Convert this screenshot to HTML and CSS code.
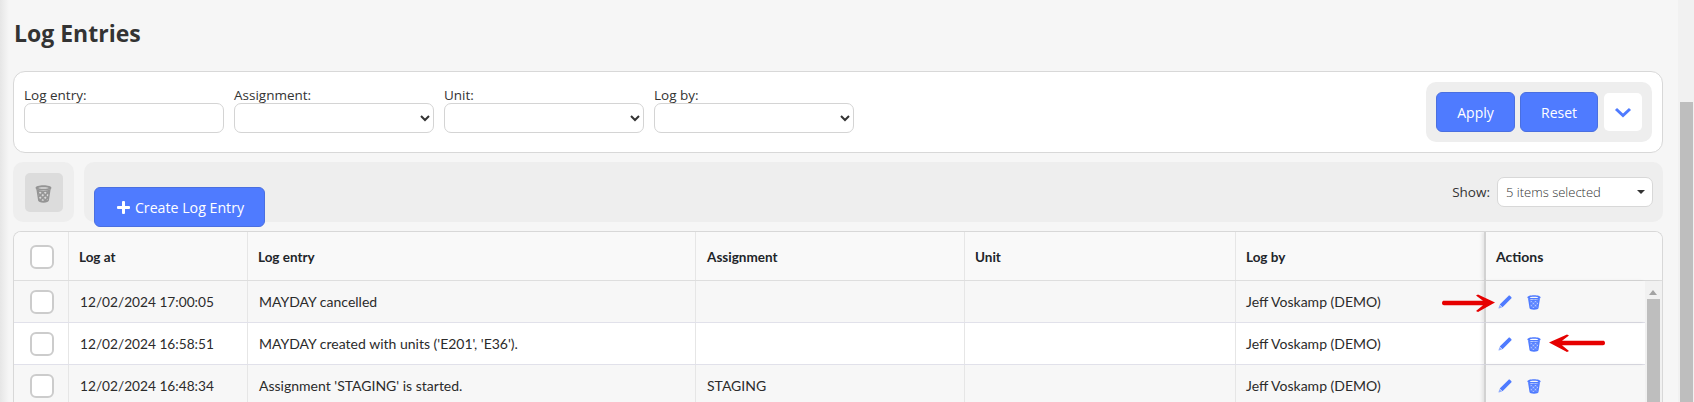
FILE: index.html
```html
<!DOCTYPE html>
<html lang="en">
<head>
<meta charset="utf-8">
<title>Log Entries</title>
<link rel="stylesheet" href="styles.css">
</head>
<body>
<svg class="defs" width="0" height="0" aria-hidden="true">
  <defs>
    <pattern id="mesh" width="3" height="3" patternUnits="userSpaceOnUse" patternTransform="rotate(45)">
      <rect x="0.7" y="0.7" width="1.6" height="1.6" fill="#fff" fill-opacity=".65"/>
    </pattern>
    <symbol id="bin" viewBox="0 0 14 15">
      <path d="M1 3.200 2.500 13c.1 1 2 1.700 4.500 1.700s4.400-.7 4.500-1.700L13 3.200C11.500 4.300 9.300 4.700 7 4.700S2.500 4.300 1 3.200Z" fill="currentColor"/>
      <path d="M2.600 5.200 3.600 12.500c1 .8 5.800.8 6.800 0L11.400 5.200C9 5.900 5 5.900 2.600 5.200Z" fill="url(#mesh)"/>
      <path d="M7 .3C3.400.3.400 1.200.4 2.500S3.400 4.400 7 4.400s6.600-.6 6.600-1.900S10.600.3 7 .3Zm0 1.500c2.600 0 4.300.3 4.300.7S9.600 3.100 7 3.100 2.700 2.900 2.700 2.500 4.400 1.800 7 1.800Z" fill="currentColor"/>
    </symbol>
    <symbol id="pencil" viewBox="0 0 14 14">
      <path d="M1.700 9.500 10.400.9c.5-.5 1.200-.5 1.700 0l1.100 1c.5.500.5 1.200 0 1.700L4.500 12.300Z" fill="currentColor"/>
      <path d="M1.500 9.900 4.100 12.500.9 13.500c-.3.1-.5-.1-.4-.4Z" fill="currentColor" fill-opacity=".6"/>
    </symbol>
  </defs>
</svg>
<div class="page">
  <main class="content">
    <h1 class="title">Log Entries</h1>

    <section class="filters">
      <div class="field">
        <label class="field-label">Log entry:</label>
        <input class="control" type="text">
      </div>
      <div class="field">
        <label class="field-label">Assignment:</label>
        <select class="control"><option></option></select>
      </div>
      <div class="field">
        <label class="field-label">Unit:</label>
        <select class="control"><option></option></select>
      </div>
      <div class="field">
        <label class="field-label">Log by:</label>
        <select class="control"><option></option></select>
      </div>
      <div class="filter-actions">
        <button class="btn btn-apply" type="button">Apply</button>
        <button class="btn btn-reset" type="button">Reset</button>
        <button class="btn-more" type="button" aria-label="More filters">
          <svg width="18" height="11" viewBox="0 0 18 11"><path d="M2 2 9 8.500 16 2" fill="none" stroke="currentColor" stroke-width="3"/></svg>
        </button>
      </div>
    </section>

    <section class="toolbar">
      <div class="bulk-panel">
        <button class="bulk-delete" type="button" aria-label="Delete selected">
          <svg class="bin-icon"><use href="#bin"/></svg>
        </button>
      </div>
      <div class="tool-panel">
        <button class="btn btn-create" type="button"><span class="plus"></span>Create Log Entry</button>
        <div class="show">
          <span class="show-label">Show:</span>
          <div class="show-select">5 items selected<span class="caret"></span></div>
        </div>
      </div>
    </section>

    <section class="table">
      <div class="row head">
        <div class="cell c-check"><span class="check"></span></div>
        <div class="cell c-at">Log at</div>
        <div class="cell c-entry">Log entry</div>
        <div class="cell c-assign">Assignment</div>
        <div class="cell c-unit">Unit</div>
        <div class="cell c-by">Log by</div>
        <div class="cell c-actions">Actions</div>
      </div>
      <div class="body">
        <div class="rows">
          <div class="row odd">
            <div class="cell c-check"><span class="check"></span></div>
            <div class="cell c-at">12/02/2024 17:00:05</div>
            <div class="cell c-entry">MAYDAY cancelled</div>
            <div class="cell c-assign"></div>
            <div class="cell c-unit"></div>
            <div class="cell c-by">Jeff Voskamp (DEMO)</div>
            <div class="cell c-actions"><svg class="pencil"><use href="#pencil"/></svg><svg class="bin-action"><use href="#bin"/></svg></div>
          </div>
          <div class="row">
            <div class="cell c-check"><span class="check"></span></div>
            <div class="cell c-at">12/02/2024 16:58:51</div>
            <div class="cell c-entry">MAYDAY created with units ('E201', 'E36').</div>
            <div class="cell c-assign"></div>
            <div class="cell c-unit"></div>
            <div class="cell c-by">Jeff Voskamp (DEMO)</div>
            <div class="cell c-actions"><svg class="pencil"><use href="#pencil"/></svg><svg class="bin-action"><use href="#bin"/></svg></div>
          </div>
          <div class="row odd">
            <div class="cell c-check"><span class="check"></span></div>
            <div class="cell c-at">12/02/2024 16:48:34</div>
            <div class="cell c-entry">Assignment 'STAGING' is started.</div>
            <div class="cell c-assign">STAGING</div>
            <div class="cell c-unit"></div>
            <div class="cell c-by">Jeff Voskamp (DEMO)</div>
            <div class="cell c-actions"><svg class="pencil"><use href="#pencil"/></svg><svg class="bin-action"><use href="#bin"/></svg></div>
          </div>
        </div>
        <div class="inner-scroll"><span class="up"></span><span class="inner-thumb"></span></div>
      </div>
    </section>

    <svg class="arrow arrow-one" width="56" height="20" viewBox="0 0 56 20"><path d="M1 10C1 8.300 2 7.800 3 7.800L42 7.800 35 2.500 37 1.500 54 9.500 37 19 35 18 42 12.200 3 12.200C2 12.200 1 11.700 1 10Z" fill="#e60000"/></svg>
    <svg class="arrow arrow-two" width="58" height="20" viewBox="0 0 58 20"><path d="M57 10C57 8.300 56 7.800 55 7.800L14 7.800 21 2.500 19 1.500 1 9.500 19 19 21 18 14 12.200 55 12.200C56 12.200 57 11.700 57 10Z" fill="#e60000"/></svg>
  </main>
  <div class="scrollbar"><span class="thumb"></span></div>
</div>
</body>
</html>
```
FILE: styles.css
```css
* { box-sizing: border-box; }
html, body { margin: 0; height: 402px; overflow: hidden; }
body { background: #f6f6f6; font-family: "Lato", sans-serif; color: #212529; }
.defs { position: absolute; }
.page { display: flex; height: 402px; }
.content {
  position: relative;
  flex: 1;
  min-width: 0;
  padding: 0 15px 0 13px;
  background: linear-gradient(90deg, #e6e6e6 0, #f6f6f6 9px);
}
.title {
  margin: 0;
  height: 71px;
  padding: 17px 0 0 1px;
  font: 700 23px/32px "Open Sans", sans-serif;
  color: #333;
}
.filters {
  display: flex;
  height: 82px;
  padding: 10px;
  gap: 10px;
  background: #fff;
  border: 1px solid #d8d8d8;
  border-radius: 12px;
}
.field { width: 200px; display: flex; flex-direction: column; justify-content: flex-end; padding-bottom: 9px; }
.field-label { font: 13.500px/16px "Open Sans", sans-serif; color: #333; }
.control {
  width: 200px;
  height: 30px;
  background: #fff;
  border: 1px solid #d4d4d4;
  border-radius: 7px;
  color: #333;
}
.filter-actions {
  display: flex;
  align-items: center;
  gap: 5px;
  margin-left: auto;
  height: 60px;
  padding: 0 10px;
  background: #eeeeee;
  border-radius: 10px;
}
.btn {
  height: 40px;
  background: #4f7bff;
  border: 1px solid #4a6fe0;
  border-radius: 6px;
  color: #fff;
  font: 14px "Open Sans", sans-serif;
}
.btn-apply { width: 79px; }
.btn-reset { width: 78px; }
.btn-more {
  width: 38px;
  height: 38px;
  margin-left: 1px;
  padding: 0;
  display: flex;
  align-items: center;
  justify-content: center;
  background: #fff;
  border: 0;
  border-radius: 5px;
  color: #4f7bff;
}
.toolbar { display: flex; gap: 10px; margin-top: 9px; height: 60px; }
.bulk-panel {
  width: 61px;
  padding: 11px 0 0 12px;
  background: #eeeeee;
  border-radius: 10px;
}
.bulk-delete {
  width: 38px;
  height: 39px;
  padding: 0;
  display: flex;
  align-items: center;
  justify-content: center;
  background: #dcdcdc;
  border: 0;
  border-radius: 5px;
  color: #949494;
}
.bin-icon { width: 17px; height: 18px; margin: 3px 2px 0 0; }
.tool-panel {
  flex: 1;
  display: flex;
  justify-content: space-between;
  align-items: flex-start;
  padding: 15px 10px 0 10px;
  background: #eeeeee;
  border-radius: 10px;
}
.btn-create {
  width: 171px;
  height: 40px;
  margin-top: 10px;
  display: flex;
  align-items: center;
  justify-content: center;
  gap: 5px;
  padding-left: 8px;
  font-size: 14.200px;
}
.plus { position: relative; width: 13px; height: 13px; }
.plus::before, .plus::after { content: ""; position: absolute; background: #fff; border-radius: 1px; }
.plus::before { left: 0; right: 0; top: 5px; height: 3px; }
.plus::after { top: 0; bottom: 0; left: 5px; width: 3px; }
.show { display: flex; align-items: flex-start; gap: 7px; }
.show-label { font: 13.500px/30px "Open Sans", sans-serif; color: #333; }
.show-select {
  position: relative;
  width: 156px;
  height: 30px;
  padding-left: 8px;
  background: #fff;
  border: 1px solid #d8d8d8;
  border-radius: 7px;
  font: 300 13px/28px "Open Sans", sans-serif;
  color: #333;
}
.caret {
  position: absolute;
  right: 7px;
  top: 12px;
  border: 4px solid transparent;
  border-top: 4px solid #333;
}
.table {
  margin-top: 9px;
  height: 171px;
  background: #fff;
  border: 1px solid #d8d8d8;
  border-bottom: 0;
  border-radius: 8px 8px 0 0;
  overflow: hidden;
}
.row { display: flex; height: 42px; background: #fff; border-bottom: 1px solid #e1e1ea; font-size: 14px; color: #2b2b2b; }
.row.odd { background: #f7f7f7; }
.row.head { height: 49px; background: #f9f9f9; border-bottom: 1px solid #dedede; font-weight: 700; font-size: 13.500px; color: #212529; }
.cell { display: flex; align-items: center; border-right: 1px solid #e6e6e6; padding-left: 10px; flex: none; }
.head .cell { padding-top: 1px; }
.c-check { width: 55px; padding-left: 16px; }
.c-at { width: 179px; }
.row:not(.head) .c-at { padding-left: 11px; font-size: 13.700px; }
.c-entry { width: 448px; }
.row:not(.head) .c-entry { padding-left: 11px; }
.c-assign { width: 269px; padding-left: 11px; }
.c-unit { width: 271px; }
.c-by { width: 248px; border-right: 0; }
.c-actions { flex: 1; border-left: 2px solid #d2d2d2; border-right: 0; box-shadow: -2px 0 3px rgba(0,0,0,.08); gap: 15px; padding-left: 10px; }
.head .c-actions { font-size: 14px; }
.rows .c-actions { padding-left: 12px; }
.check { display: block; width: 24px; height: 24px; background: #fff; border: 2px solid #cccccc; border-radius: 6px; }
.body { display: flex; }
.rows { flex: 1; min-width: 0; }
.pencil { width: 14px; height: 14px; color: #4f7bff; }
.bin-action { width: 14px; height: 15px; margin-top: 1px; color: #4f7bff; }
.inner-scroll { position: relative; width: 17px; background: #f1f1f1; flex: none; }
.up {
  position: absolute;
  left: 4px;
  top: 9px;
  border: 4px solid transparent;
  border-bottom: 5px solid #a3a3a3;
  border-top: 0;
}
.inner-thumb { position: absolute; left: 2px; right: 2px; top: 18px; bottom: 0; background: #bebebe; }
.scrollbar { position: relative; width: 16px; background: #f1f1f1; flex: none; }
.thumb { position: absolute; left: 2px; right: 1px; top: 102px; bottom: 0; background: #bebebe; }
.arrow { position: absolute; }
.arrow-one { left: 1441px; top: 293px; }
.arrow-two { left: 1548px; top: 333px; }
```
